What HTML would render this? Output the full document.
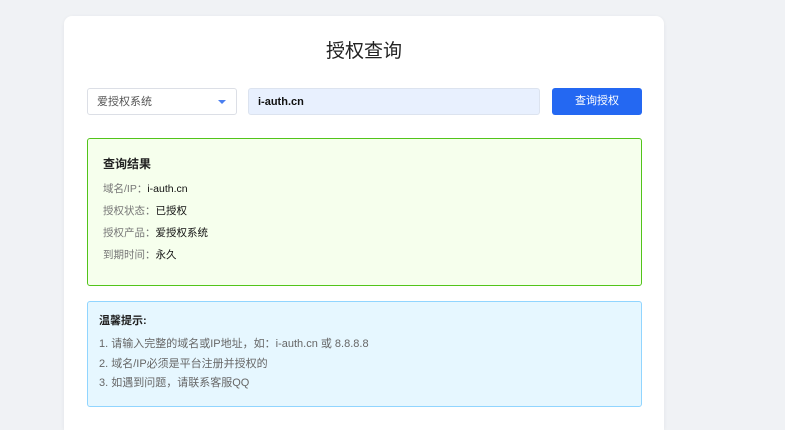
<!DOCTYPE html>
<html><head><meta charset="utf-8"><style>
*{box-sizing:border-box;margin:0;padding:0}
html,body{width:785px;height:430px;overflow:hidden}
body{background:#f0f2f5;font-family:"Liberation Sans","Noto Sans CJK SC",sans-serif;position:relative}
.card{position:absolute;left:64px;top:16px;width:600px;height:414px;background:#fff;border-radius:8px 8px 0 0;box-shadow:0 1px 4px rgba(0,0,0,.06)}
h1{position:absolute;left:0;width:600px;top:24px;text-align:center;font-size:19px;font-weight:normal;color:#222;line-height:24px}
.sel{position:absolute;left:23px;top:72px;width:150px;height:27px;border:1px solid #dcdfe6;border-radius:3px;font-size:11px;color:#555;padding:6px 9px;line-height:14px}
.sel i{position:absolute;right:10px;top:11px;border:4px solid transparent;border-top:4px solid #4a7ff0;border-bottom:0}
.inp{position:absolute;left:184px;top:72px;width:292px;height:27px;background:#e8f0fe;border:1px solid #dce3ef;border-radius:3px;font-size:11px;color:#111;padding:6px 9px;line-height:14px;font-weight:bold}
.btn{position:absolute;left:488px;top:72px;width:90px;height:27px;background:#2468f2;border-radius:3px;color:#fff;font-size:11px;text-align:center;line-height:27px}
.res{position:absolute;left:23px;top:122px;width:555px;height:148px;background:#f6ffed;border:1px solid #52c41a;border-radius:3px;padding:17px 15px;font-size:10.5px}
.res b{display:block;font-size:12px;color:#222;font-weight:bold;margin-bottom:10px;line-height:16px}
.res p{line-height:14px;margin-bottom:8px;color:#777}
.res p span{color:#111}
.tip{position:absolute;left:23px;top:285px;width:555px;height:106px;background:#e6f7ff;border:1px solid #91d5ff;border-radius:3px;padding:12px 11px;font-size:11px;color:#666}
.tip b{display:block;color:#222;font-size:11px;margin-bottom:9px;line-height:14px}
.tip p{line-height:14px;margin-bottom:5.5px}
</style></head><body>
<div class="card">
<h1>授权查询</h1>
<div class="sel">爱授权系统<i></i></div>
<div class="inp">i-auth.cn</div>
<div class="btn">查询授权</div>
<div class="res"><b>查询结果</b>
<p>域名/IP：<span>i-auth.cn</span></p>
<p>授权状态：<span>已授权</span></p>
<p>授权产品：<span>爱授权系统</span></p>
<p>到期时间：<span>永久</span></p>
</div>
<div class="tip"><b>温馨提示:</b>
<p>1. 请输入完整的域名或IP地址，如：i-auth.cn 或 8.8.8.8</p>
<p>2. 域名/IP必须是平台注册并授权的</p>
<p>3. 如遇到问题，请联系客服QQ</p>
</div>
</div>
</body></html>
